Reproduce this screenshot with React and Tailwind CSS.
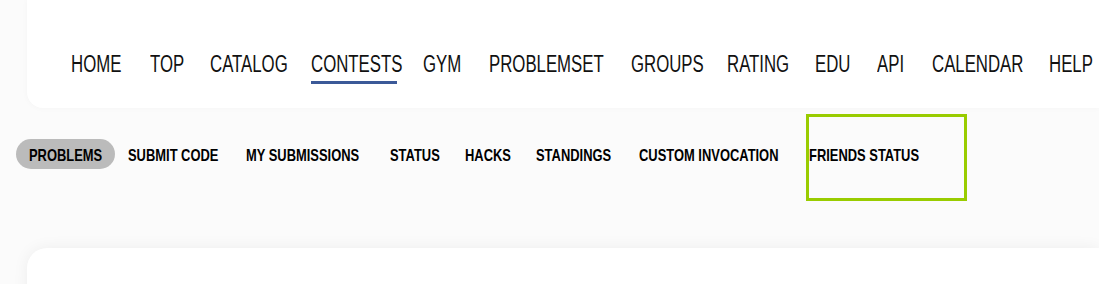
import React from 'react'

// widths taken so the narrow lettering lands where the original menu puts it
const mainMenu = [
  { name: 'HOME', w: 'w-[79px]' },
  { name: 'TOP', w: 'w-[60px]' },
  { name: 'CATALOG', w: 'w-[101px]' },
  { name: 'CONTESTS', w: 'w-[112px]' },
  { name: 'GYM', w: 'w-[66px]' },
  { name: 'PROBLEMSET', w: 'w-[142px]' },
  { name: 'GROUPS', w: 'w-[96px]' },
  { name: 'RATING', w: 'w-[88px]' },
  { name: 'EDU', w: 'w-[62px]' },
  { name: 'API', w: 'w-[55px]' },
  { name: 'CALENDAR', w: 'w-[117px]' },
  { name: 'HELP', w: 'w-[60px]' },
]

const subMenu = [
  { name: 'PROBLEMS', w: 'w-[112px]', active: true },
  { name: 'SUBMIT CODE', w: 'w-[118px]' },
  { name: 'MY SUBMISSIONS', w: 'w-[144px]' },
  { name: 'STATUS', w: 'w-[75px]' },
  { name: 'HACKS', w: 'w-[71px]' },
  { name: 'STANDINGS', w: 'w-[103px]' },
  { name: 'CUSTOM INVOCATION', w: 'w-[170px]' },
  { name: 'FRIENDS STATUS', w: 'w-[130px]' },
]

export default function App() {
  return (
    <div className="w-[1099px] h-[284px] overflow-hidden bg-[#fbfbfb]" style={{ fontFamily: '"Liberation Sans", Arial, sans-serif' }}>
      {/* main menu */}
      <div className="ml-[27px] h-[108px] bg-white rounded-bl-2xl shadow-[0_0_6px_rgba(0,0,0,0.03)] flex items-center pl-[44px] pt-[20px]">
        <ul className="flex whitespace-nowrap">
          {mainMenu.map((item) => (
            <li key={item.name} className={`relative shrink-0 ${item.w} h-[23px] text-[23px] leading-none text-[#111]`}>
              <span className="inline-block origin-left scale-x-[0.73]">{item.name}</span>
              {item.name === 'CONTESTS' && (
                <span className="absolute left-0 w-[86px] top-[28px] h-[3px] bg-[#3b5998]" />
              )}
            </li>
          ))}
        </ul>
      </div>

      {/* contest menu */}
      <div className="relative h-[140px] pl-[16px] pt-[31px]">
        <ul className="flex whitespace-nowrap">
          {subMenu.map((item) => (
            <li key={item.name} className={`shrink-0 ${item.w} h-[30px] flex items-center`}>
              <span
                className={`h-[30px] flex items-center pt-[4px] rounded-full text-[17px] font-bold text-black ${item.active ? 'bg-[#bbbbbb] pl-[13px] w-[99px]' : ''}`}
              >
                <span className="inline-block origin-left scale-x-[0.76]">{item.name}</span>
              </span>
            </li>
          ))}
        </ul>
        <div className="absolute left-[806px] top-[6px] w-[161px] h-[87px] border-[3px] border-[#99cc00]" />
      </div>

      {/* content */}
      <div className="ml-[27px] h-[60px] bg-white rounded-tl-[20px] shadow-[0_0_16px_rgba(0,0,0,0.06)]" />
    </div>
  )
}
